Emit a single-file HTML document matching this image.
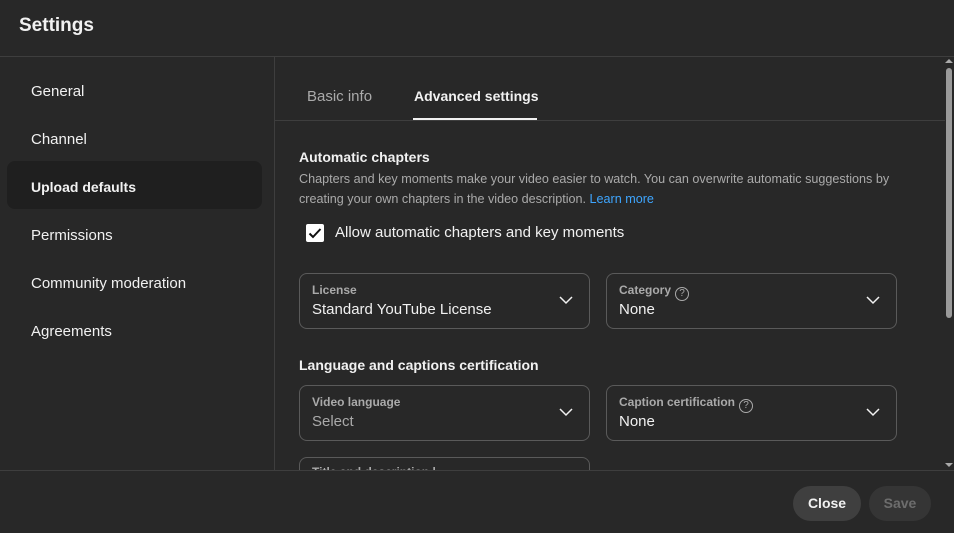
<!DOCTYPE html>
<html><head><style>
*{box-sizing:border-box;margin:0;padding:0}
body{width:954px;height:533px;background:#282828;font-family:"Liberation Sans",sans-serif;color:#f1f1f1;position:relative;overflow:hidden}
.a{position:absolute}
.hl{height:1px;background:#3e3e3e}
.nav{left:31px;font-size:15px;color:#f1f1f1}
.box{position:absolute;border:1px solid #5a5a5a;border-radius:8px;width:291px;height:56px}
.box .l{position:absolute;left:12px;top:9px;font-size:12px;color:#aaa;font-weight:bold}
.box .v{position:absolute;left:12px;top:27px;font-size:15px;color:#f1f1f1}
.box svg.ch{position:absolute;right:16px;top:21px}
.q{display:inline-block;width:14px;height:14px;border:1.3px solid #aaa;border-radius:50%;font-size:10px;text-align:center;line-height:12px;vertical-align:-2px;margin-left:4px;font-weight:normal}
</style></head><body>
<div class="a" style="left:19px;top:15px;font-size:19px;font-weight:bold">Settings</div>
<div class="a hl" style="left:0;top:56px;width:954px"></div>
<div class="a" style="left:274px;top:57px;width:1px;height:413px;background:#3e3e3e"></div>
<div class="a" style="left:7px;top:161px;width:255px;height:48px;background:#1f1f1f;border-radius:8px"></div>
<div class="a nav" style="top:83px">General</div>
<div class="a nav" style="top:131px">Channel</div>
<div class="a nav" style="top:179px;font-weight:bold;font-size:14px">Upload defaults</div>
<div class="a nav" style="top:227px">Permissions</div>
<div class="a nav" style="top:275px">Community moderation</div>
<div class="a nav" style="top:323px">Agreements</div>

<div class="a" style="left:307px;top:88px;font-size:15px;color:#aaa">Basic info</div>
<div class="a" style="left:414px;top:88px;font-size:14px;font-weight:bold">Advanced settings</div>
<div class="a" style="left:413px;top:118px;width:124px;height:2px;background:#f1f1f1"></div>
<div class="a hl" style="left:275px;top:120px;width:670px"></div>

<div class="a" style="left:299px;top:149px;font-size:14px;font-weight:bold">Automatic chapters</div>
<div class="a" style="left:299px;top:169px;font-size:12.6px;color:#aaa;line-height:20px;width:600px">Chapters and key moments make your video easier to watch. You can overwrite automatic suggestions by creating your own chapters in the video description. <span style="color:#3ea6ff">Learn more</span></div>
<div class="a" style="left:306px;top:224px;width:18px;height:18px;background:#fff;border-radius:2px"><svg width="18" height="18"><path d="M3.5 9.5l3.5 3.5 7.5-8" stroke="#0f0f0f" stroke-width="2" fill="none"/></svg></div>
<div class="a" style="left:335px;top:224px;font-size:15px">Allow automatic chapters and key moments</div>

<div class="box" style="left:299px;top:273px"><div class="l">License</div><div class="v">Standard YouTube License</div><svg class="ch" width="14" height="10"><path d="M1 2l6 6 6-6" stroke="#f1f1f1" stroke-width="1.5" fill="none"/></svg></div>
<div class="box" style="left:606px;top:273px"><div class="l">Category<span class="q">?</span></div><div class="v">None</div><svg class="ch" width="14" height="10"><path d="M1 2l6 6 6-6" stroke="#f1f1f1" stroke-width="1.5" fill="none"/></svg></div>
<div class="a" style="left:299px;top:357px;font-size:14px;font-weight:bold">Language and captions certification</div>
<div class="box" style="left:299px;top:385px"><div class="l">Video language</div><div class="v" style="color:#aaa">Select</div><svg class="ch" width="14" height="10"><path d="M1 2l6 6 6-6" stroke="#f1f1f1" stroke-width="1.5" fill="none"/></svg></div>
<div class="box" style="left:606px;top:385px"><div class="l">Caption certification<span class="q">?</span></div><div class="v">None</div><svg class="ch" width="14" height="10"><path d="M1 2l6 6 6-6" stroke="#f1f1f1" stroke-width="1.5" fill="none"/></svg></div>
<div class="a" style="left:299px;top:457px;width:291px;height:13px;border:1px solid #5a5a5a;border-bottom:none;border-radius:8px 8px 0 0;overflow:hidden"><div style="position:absolute;left:12px;top:7px;font-size:12px;color:#aaa;font-weight:bold">Title and description l</div></div>

<div class="a" style="left:946px;top:68px;width:6px;height:250px;background:#9a9a9a;border-radius:3px"></div>
<svg class="a" style="left:945px;top:58px" width="8" height="6"><path d="M0 5l4-4 4 4z" fill="#aaa"/></svg>
<svg class="a" style="left:945px;top:462px" width="8" height="6"><path d="M0 1l4 4 4-4z" fill="#aaa"/></svg>
<div class="a hl" style="left:0;top:470px;width:954px"></div>
<div class="a" style="left:793px;top:486px;width:68px;height:35px;border-radius:18px;background:#3f3f3f;font-size:14px;font-weight:bold;text-align:center;line-height:35px">Close</div>
<div class="a" style="left:869px;top:486px;width:62px;height:35px;border-radius:18px;background:#353535;color:#6d6d6d;font-size:14px;font-weight:bold;text-align:center;line-height:35px">Save</div>
</body></html>
